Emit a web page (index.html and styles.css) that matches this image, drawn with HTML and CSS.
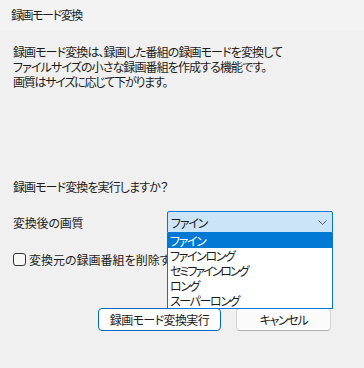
FILE: index.html
```html
<!DOCTYPE html>
<html lang="ja">
<head>
<meta charset="utf-8">
<link rel="stylesheet" href="styles.css">
</head>
<body>
<div class="window">
  <div class="titlebar"><span class="title">録画モード変換</span></div>
  <div class="content">
    <div class="desc">
      <div class="line">録画モード変換は、録画した番組の録画モードを変換して</div>
      <div class="line">ファイルサイズの小さな録画番組を作成する機能です。</div>
      <div class="line narrow">画質はサイズに応じて下がります。</div>
    </div>
    <p class="question">録画モード変換を実行しますか？</p>
    <div class="row">
      <span class="label">変換後の画質</span>
      <div class="combo">
        <div class="select">
          <span class="value">ファイン</span>
          <svg class="chev" width="9" height="5" viewBox="0 0 9 5"><path d="M0.5 0.5 L4.5 4.5 L8.5 0.5" fill="none" stroke="#5a5a5a" stroke-width="1"/></svg>
        </div>
        <ul class="list">
          <li class="sel">ファイン</li>
          <li>ファインロング</li>
          <li class="semi">セミファインロング</li>
          <li>ロング</li>
          <li>スーパーロング</li>
        </ul>
      </div>
    </div>
    <label class="check"><span class="box"></span><span class="check-text">変換元の録画番組を削除する</span></label>
    <div class="buttons">
      <button class="btn default">録画モード変換実行</button>
      <button class="btn cancel">キャンセル</button>
    </div>
  </div>
</div>
</body>
</html>
```
FILE: styles.css
```css
html, body {
  margin: 0;
  padding: 0;
  background: #f0f0f0;
}
body {
  width: 364px;
  height: 368px;
  overflow: hidden;
  font-family: "Noto Sans CJK JP", sans-serif;
  font-size: 12px;
  font-feature-settings: "palt";
  color: #1b1b1b;
}
.titlebar {
  height: 30px;
  line-height: 30px;
  padding-left: 11px;
  background: #f3f3f3;
}
.title {
  letter-spacing: -1.4px;
}
.content {
  padding: 14px 13px 0 13px;
}
.desc {
  letter-spacing: -0.9px;
}
.line {
  height: 15px;
  line-height: 15px;
  white-space: nowrap;
}
.line.narrow {
  letter-spacing: -1.25px;
}
.question {
  margin: 90px 0 0 0;
  line-height: 15px;
  letter-spacing: -0.9px;
}
.row {
  margin-top: 17px;
  display: flex;
  align-items: center;
}
.label {
  width: 154px;
  letter-spacing: -0.2px;
}
.combo {
  position: relative;
  width: 166px;
}
.select {
  box-sizing: border-box;
  height: 22px;
  border: 1px solid #0078d4;
  border-radius: 2px 2px 0 0;
  background: #cce4f7;
  display: flex;
  align-items: center;
  justify-content: space-between;
  padding: 0 5px 0 3px;
}
.value {
  letter-spacing: -1.2px;
}
.chev {
  display: block;
}
.list {
  position: absolute;
  top: 22px;
  left: 0;
  width: 166px;
  box-sizing: border-box;
  margin: 0;
  padding: 0;
  list-style: none;
  border: 1px solid #0078d4;
  border-top: none;
  background: #ffffff;
  z-index: 2;
  letter-spacing: -1.4px;
}
.list li {
  height: 15px;
  line-height: 15px;
  padding-left: 2px;
  white-space: nowrap;
}
.list li.semi {
  letter-spacing: -2px;
}
.list li.sel {
  background: #0078d4;
  color: #ffffff;
}
.check {
  margin-top: 20px;
  display: flex;
  align-items: center;
  height: 13px;
  white-space: nowrap;
}
.box {
  width: 13px;
  height: 13px;
  box-sizing: border-box;
  border: 1px solid #333333;
  border-radius: 3px;
  background: #f7f7f7;
  margin-right: 3px;
  flex: none;
}
.check-text {
  width: 138px;
  overflow: hidden;
  line-height: 15px;
}
.buttons {
  margin-top: 42px;
  display: flex;
  justify-content: flex-end;
  gap: 15px;
  padding-right: 20px;
}
.btn {
  font-family: inherit;
  font-size: 12px;
  font-feature-settings: "palt";
  color: #1b1b1b;
  height: 23px;
  box-sizing: border-box;
  border-radius: 4px;
  padding: 0;
  line-height: 20px;
}
.default {
  width: 123px;
  border: 1px solid #0067c0;
  background: #fdfdfd;
  letter-spacing: -0.6px;
}
.cancel {
  width: 95px;
  border: 1px solid #d4d4d4;
  border-bottom-color: #b0b0b0;
  background: #fbfbfb;
  letter-spacing: -1.3px;
}
```
